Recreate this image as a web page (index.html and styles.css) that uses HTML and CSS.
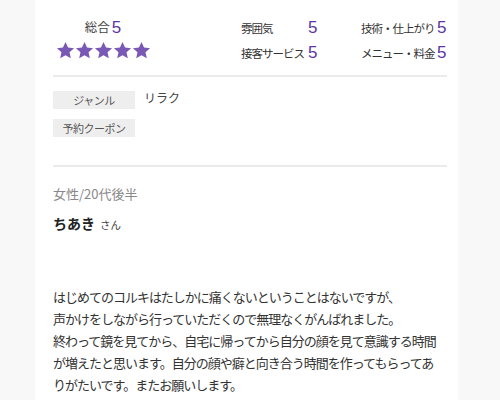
FILE: index.html
```html
<!DOCTYPE html>
<html lang="ja">
	<head>
		<meta charset="utf-8">
		<title>口コミ</title>
		<link rel="stylesheet" href="styles.css">
	</head>
	<body>
		<div id="review">
			<div class="ratings">
				<div class="total">
					<div class="total_label">総合<span class="num">5</span></div>
					<div class="stars">
						<svg viewBox="0 0 24 24"><polygon points="12,1.2 15.2,8.2 22.8,9 17.1,14.2 18.7,21.8 12,17.9 5.3,21.8 6.9,14.2 1.2,9 8.8,8.2"/></svg>
						<svg viewBox="0 0 24 24"><polygon points="12,1.2 15.2,8.2 22.8,9 17.1,14.2 18.7,21.8 12,17.9 5.3,21.8 6.9,14.2 1.2,9 8.8,8.2"/></svg>
						<svg viewBox="0 0 24 24"><polygon points="12,1.2 15.2,8.2 22.8,9 17.1,14.2 18.7,21.8 12,17.9 5.3,21.8 6.9,14.2 1.2,9 8.8,8.2"/></svg>
						<svg viewBox="0 0 24 24"><polygon points="12,1.2 15.2,8.2 22.8,9 17.1,14.2 18.7,21.8 12,17.9 5.3,21.8 6.9,14.2 1.2,9 8.8,8.2"/></svg>
						<svg viewBox="0 0 24 24"><polygon points="12,1.2 15.2,8.2 22.8,9 17.1,14.2 18.7,21.8 12,17.9 5.3,21.8 6.9,14.2 1.2,9 8.8,8.2"/></svg>
					</div>
				</div>
				<div class="scores">
					<span class="label">雰囲気</span><span class="num">5</span>
					<span class="label">技術・仕上がり</span><span class="num">5</span>
					<span class="label">接客サービス</span><span class="num">5</span>
					<span class="label">メニュー・料金</span><span class="num">5</span>
				</div>
			</div>

			<div class="info">
				<div class="info_row"><span class="tag">ジャンル</span><span class="value">リラク</span></div>
				<div class="info_row"><span class="tag">予約クーポン</span></div>
			</div>

			<div class="reviewer">
				<div class="attr">女性/20代後半</div>
				<div class="name">ちあき<span class="san">さん</span></div>
			</div>

			<p class="comment">はじめてのコルキはたしかに痛くないということはないですが、<br>声かけをしながら行っていただくので無理なくがんばれました。<br>終わって鏡を見てから、自宅に帰ってから自分の顔を見て意識する時間が増えたと思います。自分の顔や癖と向き合う時間を作ってもらってありがたいです。またお願いします。</p>
		</div>
	</body>
</html>
```

FILE: styles.css
```css
body {
	margin: 0;
	background-color: #f8f8f8;
	font-family: "Noto Sans CJK JP", "Noto Sans", sans-serif;
	color: #444;
	overflow: hidden;
}
#review {
	margin-left: 35px;
	width: 394px;
	min-height: 400px;
	padding: 0 11px 0 18px;
	background-color: #fff;
}

/* ratings block */
.ratings {
	display: flex;
	height: 75px;
	border-bottom: 2px solid #ebebeb;
}
.total {
	width: 100px;
	padding-top: 18px;
	text-align: center;
}
.total_label {
	font-size: 12.5px;
	line-height: 18px;
	color: #444;
}
.num {
	font-family: "Liberation Sans", sans-serif;
	font-size: 17px;
	color: #5b35a3;
	margin-left: 2px;
}
.total_label .num {
	font-size: 17px;
	vertical-align: -1px;
}
.stars {
	display: flex;
	justify-content: center;
	gap: 0;
	margin-top: 4px;
}
.stars svg {
	width: 19px;
	height: 19px;
	fill: #7a58b5;
}
.scores {
	display: grid;
	grid-template-columns: 67px 53px 76px auto;
	grid-auto-rows: 25px;
	align-items: center;
	margin-left: 88px;
	padding-top: 15px;
}
.scores .label {
	font-size: 11.5px;
	letter-spacing: -1px;
	color: #333;
}
.scores .num {
	margin-left: 0;
	line-height: 20px;
}

/* genre / coupon */
.info {
	padding: 14px 0 28px;
	border-bottom: 2px solid #ebebeb;
}
.info_row {
	display: flex;
	align-items: center;
	margin-bottom: 10px;
	font-size: 11px;
}
.info_row:last-child {
	margin-bottom: 0;
}
.tag {
	width: 82px;
	height: 18px;
	line-height: 18px;
	text-align: center;
	letter-spacing: -0.5px;
	background-color: #eeeeee;
	color: #555;
}
.value {
	margin-left: 9px;
	font-size: 12px;
	color: #444;
	align-self: flex-start;
	line-height: 14px;
}

/* reviewer */
.reviewer {
	padding-top: 18px;
}
.attr {
	font-size: 13px;
	line-height: 18px;
	color: #888;
}
.name {
	margin-top: 11px;
	font-size: 14px;
	font-weight: bold;
	color: #222;
	line-height: 18px;
}
.san {
	margin-left: 5px;
	font-size: 10.5px;
	font-weight: normal;
	color: #444;
}

.comment {
	width: 388px;
	margin: 52px 0 0;
	font-size: 13px;
	letter-spacing: -1px;
	line-height: 22px;
	color: #333;
}
```
